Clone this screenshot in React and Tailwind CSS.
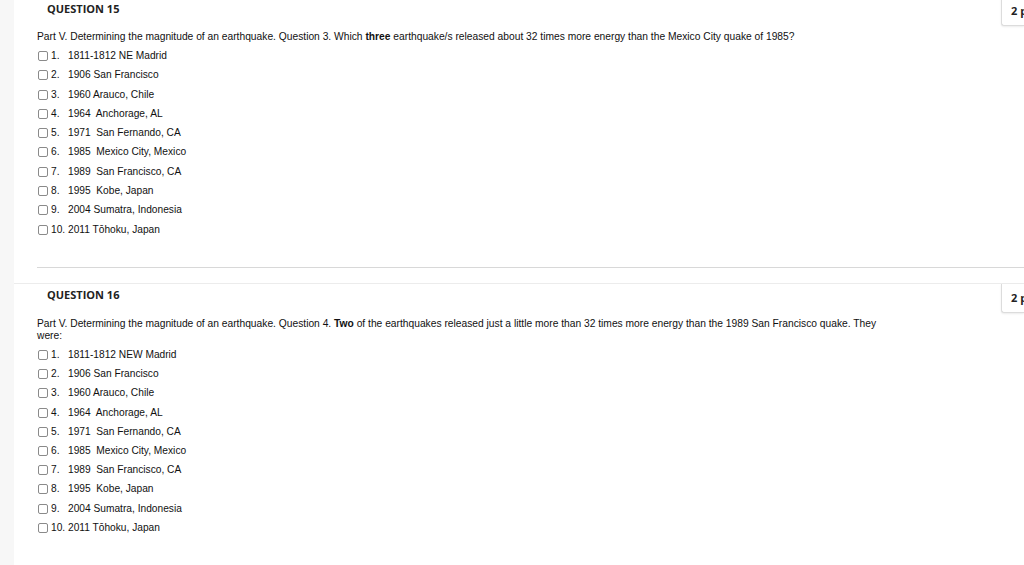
import React from "react";

const q15 = [
  ["1.", "1811-1812 NE Madrid"],
  ["2.", "1906 San Francisco"],
  ["3.", "1960 Arauco, Chile"],
  ["4.", "1964  Anchorage, AL"],
  ["5.", "1971  San Fernando, CA"],
  ["6.", "1985  Mexico City, Mexico"],
  ["7.", "1989  San Francisco, CA"],
  ["8.", "1995  Kobe, Japan"],
  ["9.", "2004 Sumatra, Indonesia"],
  ["10.", "2011 Tōhoku, Japan"],
];
const q16 = q15.map((o, i) => (i === 0 ? ["1.", "1811-1812 NEW Madrid"] : o));

function Options({ items, gap }) {
  return (
    <div className={"flex flex-col mt-[7px] " + gap}>
      {items.map(([n, t]) => (
        <div key={n} className="flex items-center h-[12px] text-[10.2px] leading-[12px] text-[#111]">
          <span className="w-[10px] h-[10px] border border-[#8a8a8a] rounded-[2px] bg-white mr-[3px] ml-[1px] shrink-0" />
          <span className="w-[17px] shrink-0">{n}</span>
          <span className="whitespace-pre">{t}</span>
        </div>
      ))}
    </div>
  );
}

function Points() {
  return (
    <div className="absolute right-0 top-0 w-[23px] h-[29px] border-l border-b border-[#dcdcdc] rounded-bl-[3px] bg-white shadow-[0_1px_2px_rgba(0,0,0,0.08)] overflow-hidden">
      <span className="absolute left-[9px] top-[6px] whitespace-nowrap text-[11px] font-bold text-[#222]" style={{ fontFamily: '"Open Sans", sans-serif' }}>2 p</span>
    </div>
  );
}

export default function App() {
  return (
    <div className="w-[1024px] h-[565px] overflow-hidden flex bg-white" style={{ fontFamily: '"Liberation Sans", Arial, sans-serif' }}>
      <div className="w-[14px] bg-[#f7f7f7] shrink-0" />
      <div className="flex-1 flex flex-col">
        <div className="relative h-[286px] mt-[-3px] pt-[3px] shrink-0">
          <Points />
          <div className="pl-[33px] pt-[1px] text-[11px] font-bold text-[#222] leading-[15px]" style={{ fontFamily: '"Open Sans", sans-serif' }}>QUESTION 15</div>
          <div className="pl-[23px] mt-[15px]">
            <div className="w-[860px] text-[10.25px] leading-[12px] text-[#111]">
              Part V. Determining the magnitude of an earthquake. Question 3. Which <b>three</b> earthquake/s released about 32 times more energy than the Mexico City quake of 1985?
            </div>
            <Options items={q15} gap="gap-[7.3px]" />
          </div>
          <div className="ml-[23px] mt-[31px] border-t border-[#d8d8d8]" />
        </div>
        <div className="relative border-t border-[#ececec] flex-1">
          <Points />
          <div className="pl-[33px] pt-[3px] text-[11px] font-bold text-[#222] leading-[15px]" style={{ fontFamily: '"Open Sans", sans-serif' }}>QUESTION 16</div>
          <div className="pl-[23px] mt-[16px]">
            <div className="w-[850px] text-[10.25px] leading-[12px] text-[#111]">
              Part V. Determining the magnitude of an earthquake. Question 4. <b>Two</b> of the earthquakes released just a little more than 32 times more energy than the 1989 San Francisco quake. They were:
            </div>
            <Options items={q16} gap="gap-[7.2px]" />
          </div>
        </div>
      </div>
    </div>
  );
}
